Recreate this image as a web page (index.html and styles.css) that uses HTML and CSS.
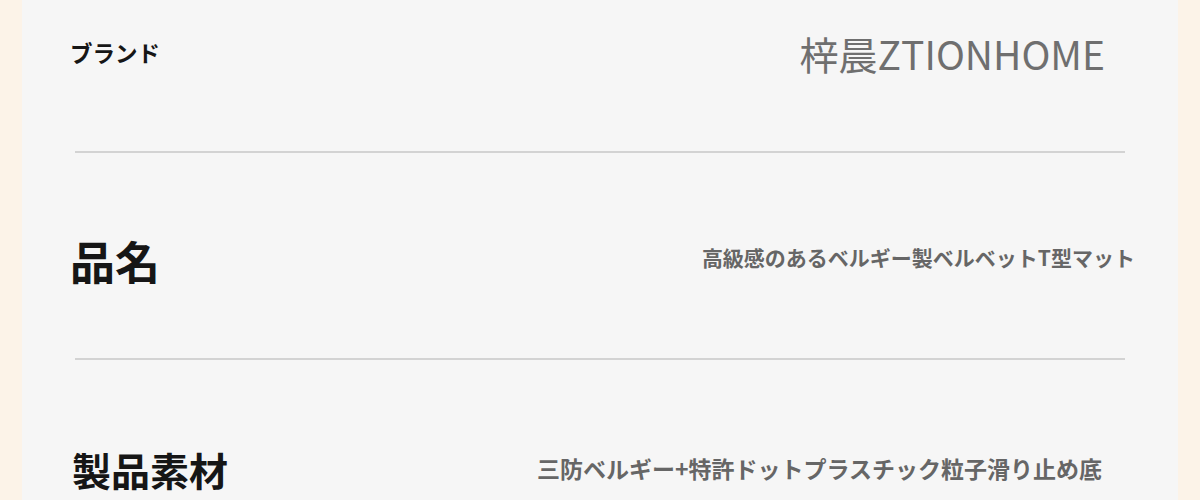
FILE: index.html
```html
<!DOCTYPE html>
<html lang="ja">
<head>
<meta charset="utf-8">
<link rel="stylesheet" href="styles.css">
</head>
<body>
<div class="panel">
  <div class="row row-brand">
    <div class="label label-sm">ブランド</div>
    <div class="value value-lg">梓晨ZTIONHOME</div>
  </div>
  <div class="divider"></div>
  <div class="row row-name">
    <div class="label label-xl">品名</div>
    <div class="value value-bold value-name">高級感のあるベルギー製ベルベットT型マット</div>
  </div>
  <div class="divider divider-2"></div>
  <div class="row row-material">
    <div class="label label-lg">製品素材</div>
    <div class="value value-bold value-material">三防ベルギー+特許ドットプラスチック粒子滑り止め底</div>
  </div>
</div>
</body>
</html>
```
FILE: styles.css
```css
html, body {
  margin: 0;
  padding: 0;
  width: 1200px;
  height: 500px;
  overflow: hidden;
  background: #fcf3e8;
  font-family: "Noto Sans CJK JP", "Noto Sans", sans-serif;
}
.panel {
  margin: 0 22px;
  height: 500px;
  background: #f6f6f6;
  display: flex;
  flex-direction: column;
}
.row {
  display: flex;
  justify-content: space-between;
  align-items: center;
  flex-shrink: 0;
}
.row-brand {
  height: 104px;
  padding: 0 73px 0 48px;
}
.row-name {
  height: 118px;
  margin-top: 48px;
  padding: 0 43px 0 48px;
}
.row-material {
  height: 80px;
  margin-top: 69px;
  padding: 0 76px 0 50px;
}
.divider {
  height: 2px;
  background: #d3d3d3;
  margin: 47px 53px 0;
  flex-shrink: 0;
}
.divider-2 {
  margin-top: 39px;
}
.label {
  color: #161616;
  font-weight: 700;
  line-height: 1;
}
.label-sm { font-size: 22.5px; }
.label-xl { font-size: 45px; }
.label-lg { font-size: 39px; }
.value {
  color: #6f6f6f;
  line-height: 1;
}
.value-lg {
  font-size: 39px;
  margin-top: 2px;
}
.value-bold {
  font-weight: 700;
  color: #666666;
}
.value-name {
  font-size: 21px;
  margin-bottom: 6px;
}
.value-material {
  font-size: 23px;
  margin-bottom: 2px;
}
```
